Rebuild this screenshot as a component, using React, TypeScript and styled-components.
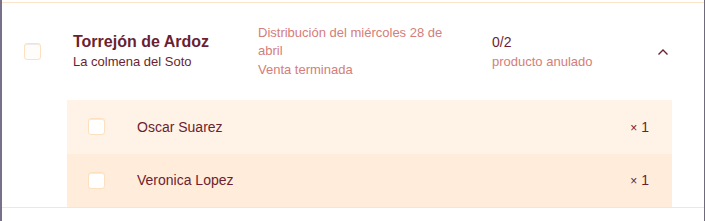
import React from "react";
import styled, { createGlobalStyle } from "styled-components";

const Global = createGlobalStyle`
  html, body { margin: 0; padding: 0; }
  body {
    background: #77728a;
    font-family: "Liberation Sans", Arial, sans-serif;
    -webkit-font-smoothing: antialiased;
  }
`;

const Card = styled.div`
  margin-left: 2px;
  width: 703px;
  height: 221px;
  background: #ffffff;
  padding-top: 2px;
  box-sizing: border-box;
  border-right: 1px solid #6f6b7c;
`;

const Item = styled.section`
  border-top: 1px solid #fde3c9;
  border-bottom: 1px solid #fde3c9;
`;

const Header = styled.div`
  display: grid;
  grid-template-columns: 49px 185px 234px 1fr auto;
  align-items: center;
  height: 97px;
  padding: 0 35px 0 22px;
`;

const Check = styled.span<{ $bg?: string }>`
  display: block;
  width: 15px;
  height: 15px;
  border: 1px solid #fde0c0;
  border-radius: 3px;
  background: ${(p) => p.$bg ?? "#fffdfb"};
  box-shadow: inset 0 1px 0 #f0ebe6;
`;

const Title = styled.div`
  font-size: 16px;
  font-weight: 700;
  color: #6b1f30;
  line-height: 20px;
`;

const Subtitle = styled.div`
  font-size: 13px;
  color: #6b1f30;
  line-height: 20px;
`;

const Info = styled.div`
  font-size: 13px;
  line-height: 18.5px;
  color: #d57d79;
  max-width: 200px;
`;

const Count = styled.div`
  font-size: 14px;
  color: #6b1f30;
  line-height: 19px;
`;

const Muted = styled.div`
  font-size: 13px;
  color: #d57d79;
  line-height: 19px;
`;

const Chevron = styled.svg`
  display: block;
  width: 12px;
  height: 8px;
`;

const SubList = styled.div`
  margin: 0 32px 0 65px;
`;

const SubRow = styled.div<{ $bg: string }>`
  display: flex;
  align-items: center;
  height: 53.5px;
  padding: 0 23px 0 21px;
  background: ${(p) => p.$bg};
`;

const Name = styled.div`
  flex: 1;
  margin-left: 32px;
  font-size: 14px;
  color: #6b1f30;
`;

const Qty = styled.div`
  font-size: 14px;
  color: #6b1f30;
  display: flex;
  align-items: baseline;
  gap: 4px;
`;

const Times = styled.span`
  font-size: 12px;
`;

const rows = [
  { name: "Oscar Suarez", qty: 1, bg: "#fff2e6" },
  { name: "Veronica Lopez", qty: 1, bg: "#ffecdb" },
];

export default function App() {
  return (
    <>
      <Global />
      <Card>
        <Item>
          <Header>
            <Check />
            <div>
              <Title>Torrejón de Ardoz</Title>
              <Subtitle>La colmena del Soto</Subtitle>
            </div>
            <Info>
              Distribución del miércoles 28 de abril
              <br />
              Venta terminada
            </Info>
            <div>
              <Count>0/2</Count>
              <Muted>producto anulado</Muted>
            </div>
            <Chevron viewBox="0 0 12 8">
              <path d="M1.5 6.5 L6 2 L10.5 6.5" fill="none" stroke="#6b1f30" strokeWidth="1.4" />
            </Chevron>
          </Header>
          <SubList>
            {rows.map((r) => (
              <SubRow key={r.name} $bg={r.bg}>
                <Check $bg="#ffffff" />
                <Name>{r.name}</Name>
                <Qty>
                  <Times>×</Times>
                  {r.qty}
                </Qty>
              </SubRow>
            ))}
          </SubList>
        </Item>
      </Card>
    </>
  );
}
